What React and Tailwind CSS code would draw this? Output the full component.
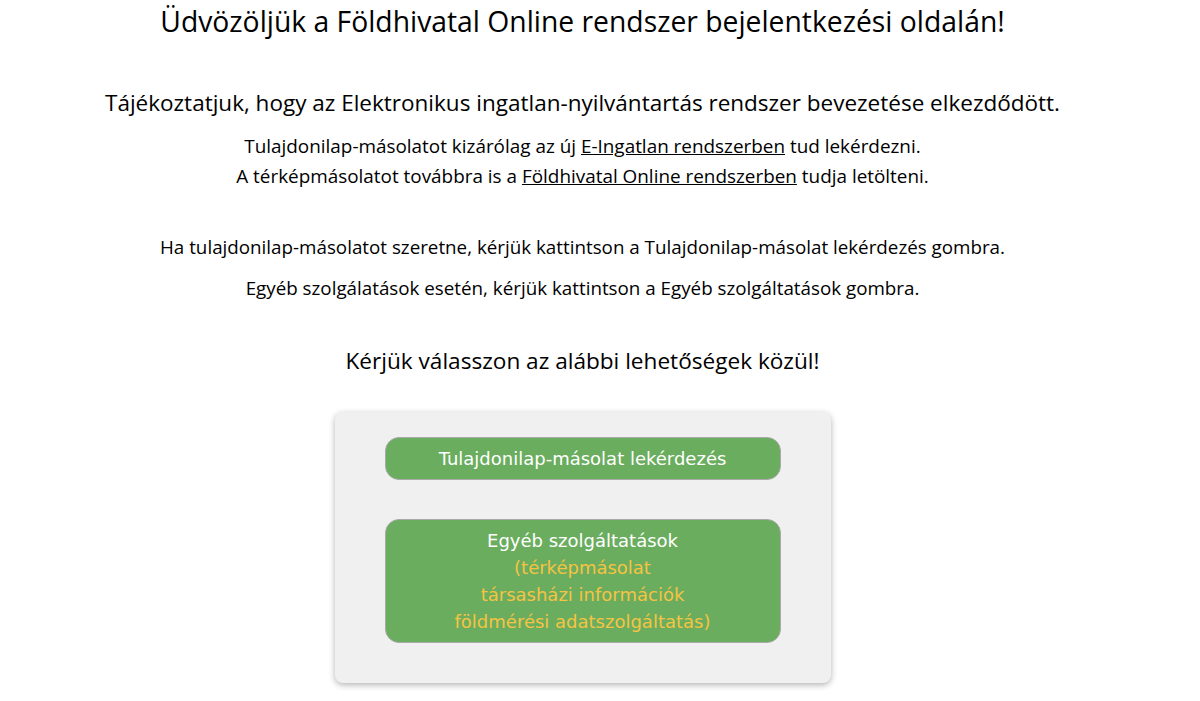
export default function App() {
  return (
    <div className="min-h-[701px] bg-white text-black font-['Open_Sans','Noto_Sans',sans-serif]">
      <div className="w-[1165px] text-center">
        <h1 className="pt-[2px] text-[28.3px] leading-[38px]">
          Üdvözöljük a Földhivatal Online rendszer bejelentkezési oldalán!
        </h1>
        <p className="mt-[48px] text-[22.5px] leading-[30px]">
          Tájékoztatjuk, hogy az Elektronikus ingatlan-nyilvántartás rendszer bevezetése elkezdődött.
        </p>
        <p className="mt-[13px] text-[18.9px] leading-[30px]">
          Tulajdonilap-másolatot kizárólag az új{" "}
          <a href="#" className="underline">E-Ingatlan rendszerben</a> tud lekérdezni.
          <br />
          A térképmásolatot továbbra is a{" "}
          <a href="#" className="underline">Földhivatal Online rendszerben</a> tudja letölteni.
        </p>
        <p className="mt-[41px] text-[18.8px] leading-[30px]">
          Ha tulajdonilap-másolatot szeretne, kérjük kattintson a Tulajdonilap-másolat lekérdezés gombra.
        </p>
        <p className="mt-[11px] text-[18.8px] leading-[30px]">
          Egyéb szolgálatások esetén, kérjük kattintson a Egyéb szolgáltatások gombra.
        </p>
        <h2 className="mt-[43px] text-[22.6px] leading-[30px]">
          Kérjük válasszon az alábbi lehetőségek közül!
        </h2>
        <div className="mx-auto mt-[36px] flex w-[496px] flex-col items-center gap-[39px] rounded-[8px] bg-[#f0f0f0] pt-[25px] pb-[40px] shadow-[0_2px_6px_rgba(0,0,0,0.3)]">
          <button
            type="button"
            className="h-[43px] w-[396px] rounded-[14px] border border-[#a9a9a9] bg-[#6aad5e] text-[18px] text-white font-['DejaVu_Sans',Verdana,sans-serif]"
          >
            Tulajdonilap-másolat lekérdezés
          </button>
          <button
            type="button"
            className="flex h-[124px] w-[396px] flex-col items-center justify-center rounded-[14px] border border-[#a9a9a9] bg-[#6aad5e] text-[18px] leading-[27px] text-white font-['DejaVu_Sans',Verdana,sans-serif]"
          >
            <span>Egyéb szolgáltatások</span>
            <span className="text-[#f6c343]">(térképmásolat</span>
            <span className="text-[#f6c343]">társasházi információk</span>
            <span className="text-[#f6c343]">földmérési adatszolgáltatás)</span>
          </button>
        </div>
      </div>
    </div>
  );
}
